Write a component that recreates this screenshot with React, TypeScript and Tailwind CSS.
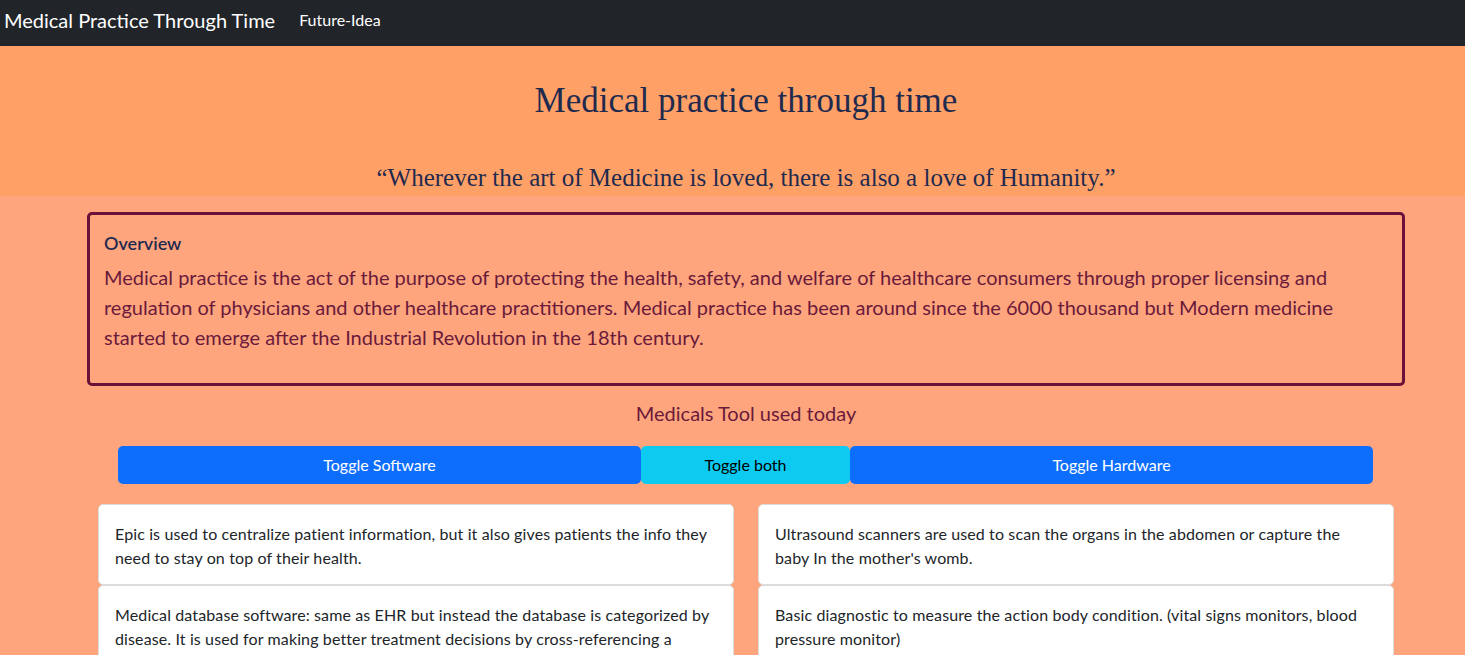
const software = [
  "Epic is used to centralize patient information, but it also gives patients the info they need to stay on top of their health.",
  "Medical database software: same as EHR but instead the database is categorized by disease. It is used for making better treatment decisions by cross-referencing a patient's condition with similar cases.",
];

const hardware = [
  "Ultrasound scanners are used to scan the organs in the abdomen or capture the baby In the mother's womb.",
  "Basic diagnostic to measure the action body condition. (vital signs monitors, blood pressure monitor)",
];

function CardColumn({ items }: { items: string[] }) {
  return (
    <div className="flex flex-col w-[636px]">
      {items.map((text) => (
        <div
          key={text}
          className="bg-white border border-[#dcdcdc] rounded-[5px] px-4 pt-[17px] pb-[14px] text-[16px] leading-[24px] tracking-[0.12px] text-[#212529]"
        >
          {text}
        </div>
      ))}
    </div>
  );
}

export default function App() {
  return (
    <div className="min-h-[655px] bg-[#ffa57e] font-['Segoe_UI','Lato',sans-serif] overflow-hidden">
      <nav className="h-[46px] bg-[#212529] flex items-center pl-[4px] pb-[7px]">
        <span className="text-white text-[20px] mr-[24px]">
          Medical Practice Through Time
        </span>
        <span className="text-white text-[16px]">Future-Idea</span>
      </nav>

      <header className="bg-[#ffa066] h-[150px] flex flex-col items-center pl-[27px] font-['Liberation_Serif',serif] text-[#1f2a4f]">
        <h1 className="text-[35px] leading-[40px] mt-[35px]">
          Medical practice through time
        </h1>
        <p className="text-[25px] leading-[30px] mt-[42px]">
          “Wherever the art of Medicine is loved, there is also a love of
          Humanity.”
        </p>
      </header>

      <main className="ml-[87px] w-[1318px] pt-[16px]">
        <section className="border-[3px] border-[#6a1039] rounded-[5px] px-[14px] pt-[17px] pb-[31px]">
          <h5 className="text-[18px] leading-[22px] font-semibold text-[#1f2a4f] mb-[8px]">
            Overview
          </h5>
          <p className="text-[20px] leading-[30px] text-[#6a1a3a]">
            Medical practice is the act of the purpose of protecting the health,
            safety, and welfare of healthcare consumers through proper
            licensing and regulation of physicians and other healthcare
            practitioners. Medical practice has been around since the 6000
            thousand but Modern medicine started to emerge after the Industrial
            Revolution in the 18th century.
          </p>
        </section>

        <p className="text-center text-[20px] leading-[28px] text-[#6a1a3a] mt-[13px]">
          Medicals Tool used today
        </p>

        <div className="flex ml-[31px] w-[1255px] mt-[19px]">
          <button className="w-[523px] h-[38px] bg-[#0d6efd] text-white text-[16px] rounded-[5px]">
            Toggle Software
          </button>
          <button className="w-[209px] h-[38px] bg-[#0dcaf0] text-black text-[16px] rounded-[5px]">
            Toggle both
          </button>
          <button className="w-[523px] h-[38px] bg-[#0d6efd] text-white text-[16px] rounded-[5px]">
            Toggle Hardware
          </button>
        </div>

        <div className="flex gap-[24px] ml-[11px] mt-[20px]">
          <CardColumn items={software} />
          <CardColumn items={hardware} />
        </div>
      </main>
    </div>
  );
}
